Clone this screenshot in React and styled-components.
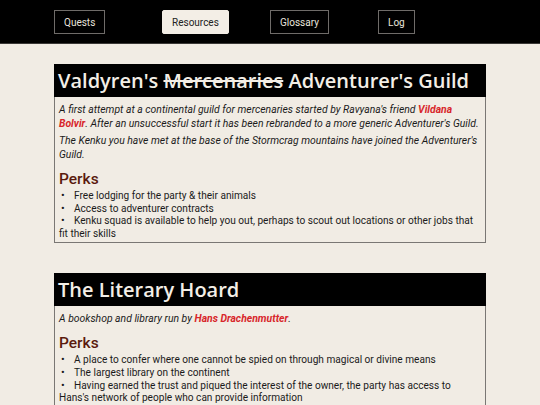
import React from "react";
import styled, { createGlobalStyle } from "styled-components";

const GlobalStyle = createGlobalStyle`
  body {
    margin: 0;
    background: #f1ece4;
    font-family: Roboto, "Open Sans", sans-serif;
    color: #1b1b1b;
  }
`;

const NAV_ITEMS = ["Quests", "Resources", "Glossary", "Log"];

const App = () => (
  <>
    <GlobalStyle />
    <NavBar>
      <NavGrid>
        {NAV_ITEMS.map((item) => (
          <NavButton key={item} $active={item === "Resources"}>
            {item}
          </NavButton>
        ))}
      </NavGrid>
    </NavBar>
    <Main>
      <Card>
        <CardTitle>
          Valdyren's <s>Mercenaries</s> Adventurer's Guild
        </CardTitle>
        <CardBody>
          <Intro>
            A first attempt at a continental guild for mercenaries started by
            Ravyana's friend <NameLink>Vildana Bolvir</NameLink>. After an
            unsuccessful start it has been rebranded to a more generic
            Adventurer's Guild.
          </Intro>
          <Intro>
            The Kenku you have met at the base of the Stormcrag mountains have
            joined the Adventurer's Guild.
          </Intro>
          <PerksHeading>Perks</PerksHeading>
          <PerkList>
            <Perk>Free lodging for the party &amp; their animals</Perk>
            <Perk>Access to adventurer contracts</Perk>
            <Perk>
              Kenku squad is available to help you out, perhaps to scout out
              locations or other jobs that fit their skills
            </Perk>
          </PerkList>
        </CardBody>
      </Card>
      <Card>
        <CardTitle>The Literary Hoard</CardTitle>
        <CardBody>
          <Intro>
            A bookshop and library run by{" "}
            <NameLink>Hans Drachenmutter</NameLink>.
          </Intro>
          <PerksHeading>Perks</PerksHeading>
          <PerkList>
            <Perk>
              A place to confer where one cannot be spied on through magical or
              divine means
            </Perk>
            <Perk>The largest library on the continent</Perk>
            <Perk>
              Having earned the trust and piqued the interest of the owner, the
              party has access to Hans's network of people who can provide
              information
            </Perk>
          </PerkList>
        </CardBody>
      </Card>
    </Main>
  </>
);

const NavBar = styled.nav`
  background: #000;
  height: 44px;
  border-bottom: 1px solid #3a3836;
  box-sizing: border-box;
`;

const NavGrid = styled.div`
  width: 432px;
  margin: 0 auto;
  padding-top: 10px;
  display: grid;
  grid-template-columns: repeat(4, 1fr);
  justify-items: start;
`;

const NavButton = styled.button`
  height: 24px;
  padding: 0 9px;
  font-family: inherit;
  font-size: 10px;
  color: ${({ $active }) => ($active ? "#222" : "#e9e4dc")};
  background: ${({ $active }) => ($active ? "#f3eee6" : "transparent")};
  border: 1px solid ${({ $active }) => ($active ? "#f3eee6" : "#6f6c69")};
  border-radius: ${({ $active }) => ($active ? "2px" : "0")};
  cursor: pointer;
`;

const Main = styled.main`
  width: 432px;
  margin: 20px auto 0;
`;

const Card = styled.section`
  margin-bottom: 30px;
`;

const CardTitle = styled.h2`
  margin: 0;
  height: 33px;
  padding: 0 4px;
  background: #000;
  color: #f3eee6;
  font-family: "Open Sans", Roboto, sans-serif;
  font-size: 20px;
  font-weight: 600;
  line-height: 33px;
  white-space: nowrap;

  s {
    text-decoration-thickness: 2px;
  }
`;

const CardBody = styled.div`
  border: 1px solid #7a7774;
  border-top: none;
  padding: 6px 3px 1px 4px;
`;

const Intro = styled.p`
  margin: 0 0 4px;
  font-size: 10.4px;
  line-height: 13.5px;
  font-style: italic;
`;

const NameLink = styled.a`
  color: #d8262b;
  font-weight: 700;
  cursor: pointer;
`;

const PerksHeading = styled.h3`
  margin: 9px 0 2px;
  font-size: 15.5px;
  line-height: 18px;
  font-weight: 500;
  color: #5a1a0d;
`;

const PerkList = styled.ul`
  margin: 0;
  padding: 0;
  list-style: none;
`;

const Perk = styled.li`
  font-size: 10.1px;
  line-height: 12.7px;

  &::before {
    content: "•";
    display: inline-block;
    width: 13px;
    padding-left: 2px;
    font-size: 11px;
  }
`;

export default App;
